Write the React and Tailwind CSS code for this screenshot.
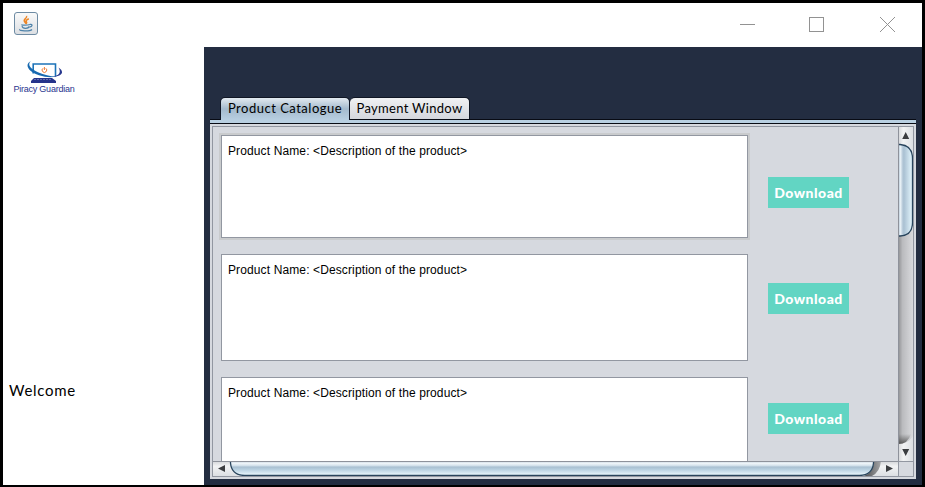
import React from "react";

const gothic = "font-['Lato','Open_Sans',sans-serif] whitespace-nowrap";

function JavaIcon() {
  return (
    <div className="flex h-[23px] w-6 items-center justify-center rounded-[3px] border border-[#6e8ba3] bg-linear-to-b from-[#fafafa] to-[#dcdfe3]">
      <svg width="16" height="18" viewBox="0 0 16 18" fill="none">
        <path d="M8.500 1c1.300 2-3.600 3.300-2 5.500L8 8.500M10.800 3.700C8.500 4.800 7.400 5.800 8.500 7c.6.700 0 1.400-.5 1.900" stroke="#ee8422" strokeWidth="1.500" />
        <path d="M3.500 9.500c0 1 6 .9 8.500 0M4 11.200c.5 2.800 6.500 2.600 7 .300M12 9.400c3-.6 2.600 2.200-.6 2.800M2 14.300c-2 2 10 2.300 12 .2" stroke="#4e82a9" strokeWidth="1.250" />
      </svg>
    </div>
  );
}

function Logo() {
  return (
    <div className="flex w-[62px] flex-col items-center">
      <svg width="38" height="23" viewBox="0 0 38 23" fill="none">
        <path d="M8.200 12.500V3h22.300v12.500" stroke="#1c73b8" strokeWidth="1.600" />
        <path d="M6 0C-1 3.500 3 10.500 14 14.300c7 2.300 13 2.200 17 1.200-6-.3-12-1.500-18-4.300C5 7.500 2 3.500 6 0Z" fill="#1769b0" />
        <path d="M33.500 6.500c6 4 4.500 8.500-5.500 9.300 6-1.300 8.500-4.300 5.500-9.300Z" fill="#27378e" />
        <path d="M9 17h18l4 3v2H6v-2z" fill="#26348b" />
        <path d="M9 18.500h18" stroke="#7c8abe" strokeWidth=".7" strokeDasharray="2 1" />
        <path d="M18 7.300a2.300 2.300 0 1 0 2.800 0M19.400 6v3" stroke="#ec7a32" strokeWidth="1" />
      </svg>
      <span className="font-['Liberation_Sans',sans-serif] text-[9px] leading-[11px] tracking-[-0.240px] whitespace-nowrap text-[#29358f]">Piracy Guardian</span>
    </div>
  );
}

function TitleBar() {
  return (
    <header className="flex h-11 shrink-0 justify-between bg-white">
      <div className="pt-[9px] pl-[11px]"><JavaIcon /></div>
      <svg width="190" height="44" viewBox="732 3 190 44" fill="none" stroke="#929292">
        <path d="M740 24.500h15" />
        <rect x="809.500" y="17.500" width="14" height="14" />
        <path d="M880 17l15 15M895 17l-15 15" />
      </svg>
    </header>
  );
}

function Product({ box, button, focused }) {
  return (
    <section className="flex items-start">
      <div
        className={`w-[527px] shrink-0 border border-[#9297a1] bg-white pt-2 pl-1.5 font-['Liberation_Sans',Arial,sans-serif] text-[12px] leading-[14px] tracking-[0.120px] text-black ${box} ${focused ? "shadow-[0_0_0_2px_#c9cbcd]" : ""}`}
      >
        Product Name: &lt;Description of the product&gt;
      </div>
      <button className={`ml-5 flex h-[31px] w-[81px] items-center justify-center bg-[#62d5c3] pb-px text-[14px] font-black tracking-[0.500px] text-white ${gothic} ${button}`}>
        Download
      </button>
    </section>
  );
}

function VerticalBar() {
  return (
    <svg className="shrink-0" width="15" height="334" viewBox="898 127 15 334">
      <defs>
        <linearGradient id="vThumb">
          <stop offset="0" stopColor="#a9bdcf" /><stop offset=".12" stopColor="#d5e1ea" />
          <stop offset=".2" stopColor="#f0f7fb" /><stop offset=".26" stopColor="#c3d3e0" />
          <stop offset=".4" stopColor="#a9c0d2" /><stop offset="1" stopColor="#e6f8ff" />
        </linearGradient>
        <linearGradient id="vTrack">
          <stop offset="0" stopColor="#8d8e91" /><stop offset=".3" stopColor="#babbbe" /><stop offset="1" stopColor="#d9dadd" />
        </linearGradient>
        <linearGradient id="vButton">
          <stop offset="0" stopColor="#d2d4d7" /><stop offset=".35" stopColor="#f2f3f4" /><stop offset="1" stopColor="#dcdfe3" />
        </linearGradient>
        <linearGradient id="vEnd" x2="0" y2="1">
          <stop offset="0" stopColor="#555" stopOpacity="0" /><stop offset="1" stopColor="#444" stopOpacity=".85" />
        </linearGradient>
      </defs>
      <path d="M898 127h15v334h-15z" fill="url(#vTrack)" />
      <path d="M898 127h15v28q-4-10-15-10zM898 444q10 0 15-8v25h-15z" fill="url(#vButton)" />
      <path d="M898 434h13q-3 10-13 10z" fill="url(#vEnd)" />
      <path d="M898 144.500h2q12.500 1 12.500 14v64q0 13-12.500 13.500h-2z" fill="url(#vThumb)" stroke="#28445c" strokeWidth="1.300" />
      <path d="M898.500 127v334" stroke="#8e929b" />
      <path d="M902.200 139l3.500-7 3.500 7zM902.200 449l3.500 7 3.500-7z" fill="#3b3d40" />
    </svg>
  );
}

function HorizontalBar() {
  return (
    <svg className="shrink-0" width="685" height="15" viewBox="213 461 685 15">
      <defs>
        <linearGradient id="hThumb" x2="0" y2="1">
          <stop offset="0" stopColor="#a9bdcf" /><stop offset=".14" stopColor="#f2f7fa" />
          <stop offset=".3" stopColor="#d8e5ee" /><stop offset=".42" stopColor="#a9c0d2" />
          <stop offset=".6" stopColor="#b9d1e1" /><stop offset="1" stopColor="#eefaff" />
        </linearGradient>
        <linearGradient id="hButton" x2="0" y2="1">
          <stop offset="0" stopColor="#d2d4d7" /><stop offset=".35" stopColor="#f2f3f4" /><stop offset="1" stopColor="#dcdfe3" />
        </linearGradient>
        <linearGradient id="hEnd">
          <stop offset="0" stopColor="#4b4c4e" /><stop offset="1" stopColor="#a5a6a8" />
        </linearGradient>
      </defs>
      <path d="M213 461h685v15H213z" fill="url(#hButton)" />
      <path d="M864 476q9-3 10-15h7q-1 11-9 15z" fill="url(#hEnd)" />
      <path d="M230.500 461v2q1 12 14 12.500h615q13-.5 14-12.500v-2z" fill="url(#hThumb)" stroke="#28445c" strokeWidth="1.300" />
      <path d="M213 461.500h685" stroke="#8e929b" />
      <path d="M225 465l-7 3.500 7 3.500zM886 465l7 3.500-7 3.500z" fill="#3b3d40" />
    </svg>
  );
}

export default function App() {
  return (
    <div className="flex h-[487px] w-[925px] flex-col overflow-hidden border-t-3 border-r-3 border-b-2 border-l-3 border-black bg-white">
      <TitleBar />
      <div className="flex min-h-0 grow">
        <aside className="flex w-[201px] shrink-0 flex-col bg-white pt-[14px] pl-[10px]">
          <Logo />
          <span className={`mt-[285px] -ml-1 text-[15px] leading-5 tracking-[0.700px] text-black ${gothic}`}>Welcome</span>
        </aside>
        <main className="flex grow flex-col bg-[#232d41] px-1.5 pt-[50px] pb-1.5">
          <nav className="flex h-[22px] shrink-0 pl-2.5 text-[13px] text-black">
            <div className={`relative z-10 flex h-[23px] w-[130px] items-center justify-center rounded-t-[5px] border-x border-t border-[#101624] bg-linear-to-b from-[#e3eaf0] via-[#a4bacd] to-[#b8cfe1] tracking-[0.500px] ${gothic}`}>Product Catalogue</div>
            <div className={`flex w-[120px] items-center justify-center rounded-t-[5px] border-t border-r border-[#101624] bg-linear-to-b from-[#f0f1f3] to-[#d4d7dd] pt-px tracking-[0.300px] ${gothic}`}>Payment Window</div>
          </nav>
          <div className="h-[5px] shrink-0 border-y border-[#080b14] bg-[#b8cfe1]" />
          <div className="flex min-h-0 grow bg-[#d6d9df] px-0.5 py-0.5">
            <div className="flex h-[351px] w-[702px] flex-col border border-[#9297a1]">
              <div className="flex h-[334px] shrink-0">
                <div className="flex h-full w-[685px] flex-col overflow-hidden pt-2 pl-2">
                  <Product box="h-[103px]" button="mt-[42px]" focused />
                  <div className="mt-4"><Product box="h-[107px]" button="mt-[29px]" /></div>
                  <div className="mt-4"><Product box="h-[107px]" button="mt-[26px]" /></div>
                </div>
                <VerticalBar />
              </div>
              <div className="flex h-[15px] shrink-0">
                <HorizontalBar />
                <div className="w-[15px] border-t border-l border-[#9297a1]" />
              </div>
            </div>
          </div>
        </main>
      </div>
    </div>
  );
}
